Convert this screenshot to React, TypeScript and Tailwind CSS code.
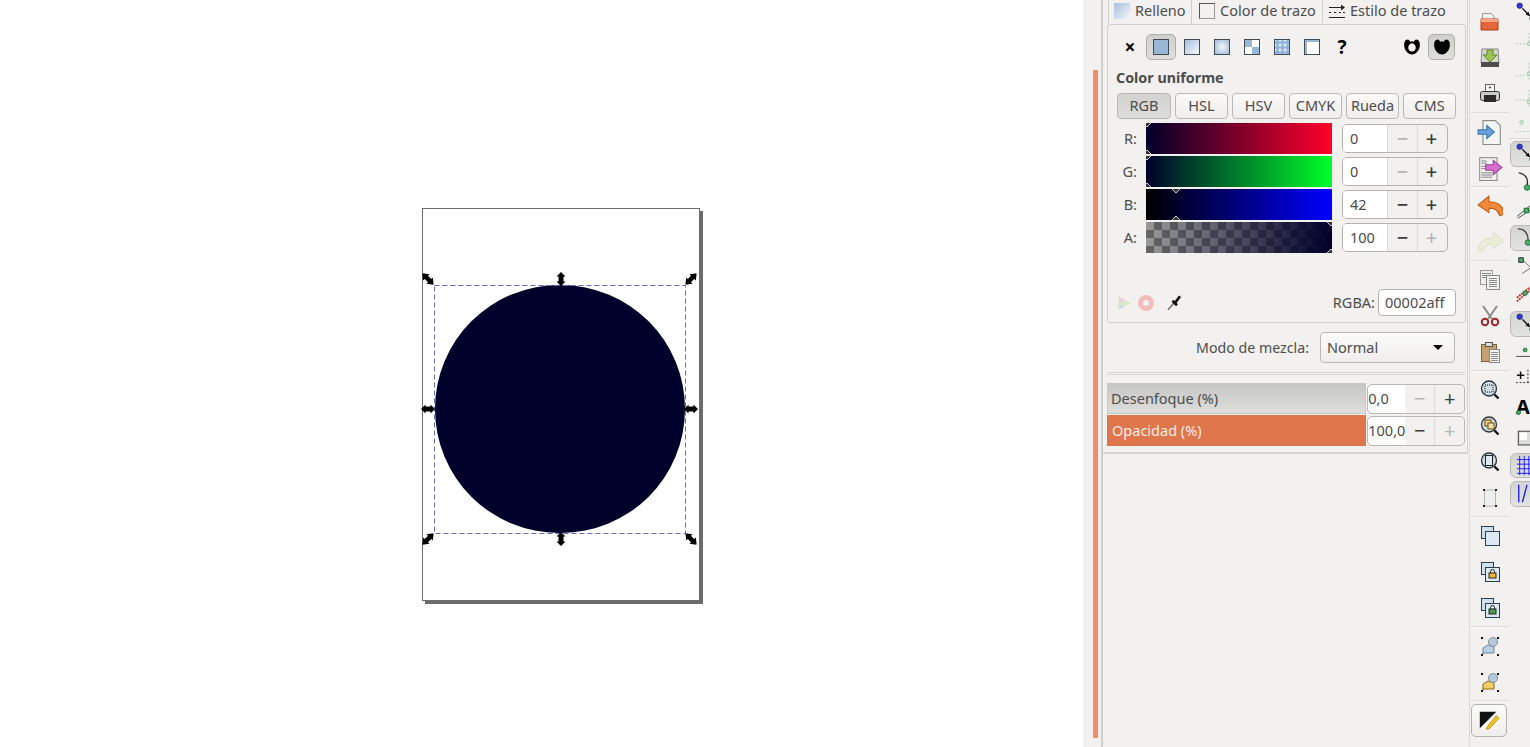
import React from "react";

const S = ({ children, size = 24, className = "" }: { children: React.ReactNode; size?: number; className?: string }) => (
  <svg width={size} height={size} viewBox="0 0 24 24" className={"shrink-0 " + className}>{children}</svg>
);

const Handle = ({ x, y, rot, diag }: { x: number; y: number; rot: number; diag?: boolean }) => (
  <svg width={diag ? 16 : 14} height={diag ? 16 : 14} viewBox="0 0 14 14" className="absolute" style={{ left: x - (diag ? 8 : 7), top: y - (diag ? 8 : 7), transform: `rotate(${rot}deg)` }}>
    <path d={diag ? "M7 0L11 5H9V9H11L7 14L3 9H5V5H3Z" : "M7 0L11.5 4.5H9.5V9.5H11.5L7 14L2.5 9.5H4.5V4.5H2.5Z"} fill="#000" />
  </svg>
);

const Mode = ({ children, active }: { children: React.ReactNode; active?: boolean }) => (
  <div className={"w-[30px] h-[26px] flex items-center justify-center shrink-0 " + (active ? "rounded-[5px] border border-[#aeaeab] bg-[linear-gradient(#cfcfcd,#dededc)] w-[28px] mx-px" : "")}>{children}</div>
);

const modeBox = "w-[16px] h-[16px] border border-[#3f4a55]";

const TabBtn = ({ t, active }: { t: string; active?: boolean }) => (
  <div className={"h-[26px] rounded-[4px] border border-[#b9b8b5] flex items-center justify-center text-[14.5px] text-[#4c4c4c] " + (active ? "w-[54px] bg-[linear-gradient(#d2d2d0,#dddddb)]" : "w-[53px] bg-[linear-gradient(#fafaf9,#efeeed)]")}>{t}</div>
);

const Spin = ({ v, minusOff, plusOff }: { v: string; minusOff?: boolean; plusOff?: boolean }) => (
  <div className="w-[106px] h-[29px] rounded-[5px] border border-[#b3b2af] flex overflow-hidden text-[14.5px] text-[#4c4c4c]">
    <div className="w-[44px] bg-white flex items-center pl-[7px]">{v}</div>
    <div className={"w-[30px] border-l border-[#dcdbd9] flex items-center justify-center text-[20px] font-medium leading-none " + (minusOff ? "text-[#b5b5b3]" : "text-[#3c3c3c]")}>−</div>
    <div className={"flex-1 pr-[2px] border-l border-[#dcdbd9] flex items-center justify-center text-[20px] font-medium leading-none " + (plusOff ? "text-[#b5b5b3]" : "text-[#3c3c3c]")}>+</div>
  </div>
);

const Marker = ({ x, top }: { x: number; top: boolean }) => (
  <svg width="10" height="6" viewBox="0 0 10 6" className={"absolute " + (top ? "top-0" : "bottom-0")} style={{ left: x - 5 }}>
    {top ? <path d="M1 0L5 4L9 0" fill="#333" stroke="#ccc" /> : <path d="M1 6L5 2L9 6" fill="#333" stroke="#ccc" />}
  </svg>
);

const Slider = ({ label, bg, x, v, minusOff, plusOff }: { label: string; bg: string; x: number; v: string; minusOff?: boolean; plusOff?: boolean }) => (
  <div className="h-[31px] flex items-center">
    <div className="w-[30px] text-right text-[14.5px] text-[#4c4c4c] pr-px">{label}</div>
    <div className={"relative w-[186px] h-[31px] ml-[8px] overflow-hidden " + bg}>
      <Marker x={x} top />
      <Marker x={x} top={false} />
    </div>
    <div className="ml-[10px]"><Spin v={v} minusOff={minusOff} plusOff={plusOff} /></div>
  </div>
);

const Bar = ({ label, v, on, minusOff, plusOff }: { label: string; v: string; on?: boolean; minusOff?: boolean; plusOff?: boolean }) => (
  <div className="h-[31px] flex items-center text-[14.5px]">
    <div className={"w-[260px] h-[31px] flex items-center " + (on ? "pl-[5px] bg-[#df764b] text-[#f6ece6]" : "bg-[linear-gradient(#c6c6c4,#dededc)] text-[#4c4c4c] border border-[#c8c8c6] pl-[3px]")}>{label}</div>
    <div className="w-[98px] h-[30px] ml-px rounded-[5px] border border-[#b9b8b5] flex text-[#4c4c4c]">
      <div className="w-[37px] bg-white rounded-l-[5px] flex items-center whitespace-nowrap overflow-hidden">{v}</div>
      <div className={"w-[29px] flex items-center justify-center text-[20px] leading-none " + (minusOff ? "text-[#b5b5b3]" : "text-[#3c3c3c]")}>−</div>
      <div className={"flex-1 border-l border-[#dcdbd9] flex items-center justify-center text-[20px] leading-none " + (plusOff ? "text-[#b5b5b3]" : "text-[#3c3c3c]")}>+</div>
    </div>
  </div>
);

const Doc = ({ x = 5, y = 2, w = 14, h = 20, fill = "#f4f4f2" }: { x?: number; y?: number; w?: number; h?: number; fill?: string }) => (
  <rect x={x + 0.5} y={y + 0.5} width={w} height={h} fill={fill} stroke="#8b8b8b" />
);

const lines = (x: number, y: number, n: number, w: number) =>
  Array.from({ length: n }).map((_, i) => <rect key={i} x={x} y={y + i * 2} width={w} height="1" fill="#8a8a8a" />);

const Mag = ({ children }: { children?: React.ReactNode }) => (
  <S>
    <circle cx="11" cy="10.5" r="7.5" fill="#cfdde6" stroke="#2e3436" strokeWidth="1.3" />
    {children}
    <path d="M16.5 16.5L20.5 20.5" stroke="#111" strokeWidth="2.4" />
  </S>
);

const Layered = ({ lock }: { lock?: string }) => (
  <S>
    <rect x="3.5" y="2.5" width="12" height="12" fill="#cfe0ee" stroke="#2e3f4f" />
    <rect x="7.5" y="7.5" width="14" height="14" fill="#dce9f3" stroke="#2e3f4f" />
    {lock && <>
      <path d="M12.5 13V11.5a2 2 0 0 1 4 0V13" fill="none" stroke="#222" />
      <rect x="11" y="13" width="7" height="5" fill={lock} stroke="#222" />
    </>}
  </S>
);

const Item = ({ children }: { children: React.ReactNode }) => <div className="h-[36px] shrink-0 flex items-center justify-center">{children}</div>;
const Sep = () => <div className="h-[2px] shrink-0 border-t border-[#dcdbd9] bg-[#f6f5f4]" />;

const SnapRow = ({ h, active, children }: { h: number; active?: boolean; children?: React.ReactNode }) => (
  <div className="shrink-0 flex items-center pl-px" style={{ height: h }}>
    <div className={"w-[28px] h-full flex items-center " + (active ? "rounded-[6px] border border-[#b9b8b5] bg-[linear-gradient(#d4d4d2,#e2e2e0)] pl-[5px]" : "pl-[6px]")}>{children}</div>
  </div>
);

const SnapArrow = () => (
  <S size={22}>
    <circle cx="4" cy="4" r="3" fill="#3333ff" stroke="#111" strokeWidth="0.6" />
    <path d="M7 7L14 14" stroke="#000" strokeWidth="1.4" />
    <path d="M15.5 15.5L10.5 13.5L13.5 10.5Z" fill="#000" />
    <circle cx="18" cy="18" r="3" fill="#4bae6a" stroke="#1e6a34" />
  </S>
);

const Faint = ({ kind }: { kind: number }) => (
  <S size={22}>
    <g stroke="#a5cfa9" strokeDasharray="2 2" fill="none">
      {kind === 0 && <path d="M0 14H14V1" />}
      {kind === 1 && <path d="M0 16H14M14 2V20" />}
      {kind === 2 && <path d="M0 12H18M14 1V20" />}
      {kind === 3 && <path d="M0 18H18V1" />}
    </g>
    <circle cx={kind === 3 ? 6 : 14} cy={kind === 3 ? 8 : 14} r="2" fill="#cfe7d1" stroke="#9fc9a4" />
  </S>
);

export default function App() {
  return (
    <div className="w-[1530px] h-[747px] flex overflow-hidden bg-[#f2f1f0] font-['Noto_Sans','Open_Sans',sans-serif]">
      {/* Canvas */}
      <div className="relative w-[1083px] h-full bg-white shrink-0">
        <div className="absolute left-[422px] top-[208px] w-[278px] h-[393px] bg-white border border-[#6e6e6e] shadow-[3px_3px_0_#6b6b6b]" />
        <div className="absolute left-[435px] top-[285px] w-[250px] h-[248px] rounded-full bg-[#00002a]" />
        <svg className="absolute left-[433px] top-[284px]" width="255" height="251">
          <rect x="1.5" y="1.5" width="251" height="248" fill="none" stroke="#6868c0" strokeDasharray="5 3" />
        </svg>
        <Handle x={428} y={279} rot={-45} diag />
        <Handle x={561} y={279} rot={0} />
        <Handle x={691} y={279} rot={45} diag />
        <Handle x={428} y={409} rot={90} />
        <Handle x={691} y={409} rot={90} />
        <Handle x={428} y={539} rot={45} diag />
        <Handle x={561} y={539} rot={0} />
        <Handle x={691} y={539} rot={-45} diag />
      </div>

      {/* Scrollbar strip */}
      <div className="w-[18px] h-full shrink-0 pl-[10px] pt-[70px] pb-[9px]">
        <div className="w-[5px] h-full bg-[#f28e66]" />
      </div>
      <div className="w-[2px] h-full shrink-0 bg-[#cfcecc]" />

      {/* Panel */}
      <div className="w-[365px] shrink-0 h-[454px] border-b-2 border-r border-[#d5d4d2] pl-[4px] flex flex-col">
        {/* Tabs */}
        <div className="h-[24px] flex text-[14.5px] text-[#4c4c4c] shrink-0 pl-px">
          <div className="w-[84px] h-[24px] border-x border-[#d0cfcc] bg-[#f2f1f0] flex items-center pl-[5px] pb-[3px] gap-[5px]">
            <div className="w-[16px] h-[16px] bg-[linear-gradient(135deg,#a8c0de,#f2f5f9)]" />Relleno
          </div>
          <div className="w-[128px] h-[23px] ml-[3px] border-r border-[#d0cfcc] flex items-center pl-[4px] pb-[2px] gap-[5px]">
            <div className="w-[16px] h-[16px] border border-[#555] border-r-[#999] border-b-[#999]" />Color de trazo
          </div>
          <div className="w-[130px] h-[23px] flex items-center pl-[5px] pb-[2px] gap-[4px]">
            <svg width="18" height="16" viewBox="0 0 18 16">
              <path d="M1 4.5H13M1 9.5H3M6 9.5H8M11 9.5H13M15 9.5H17M1 14.5H17" stroke="#222" fill="none" />
              <path d="M13 1.5L17 4.5L13 7.5Z" fill="#222" />
            </svg>
            Estilo de trazo
          </div>
        </div>

        {/* Frame */}
        <div className="w-[359px] h-[299px] shrink-0 border border-[#d0cfcc] rounded-[3px] pt-[9px] flex flex-col">
          <div className="h-[26px] flex items-center pl-[7px] pr-[10px]">
            <Mode><span className="text-[19px] font-bold text-black leading-none">×</span></Mode>
            <Mode active><div className={modeBox + " bg-[#98b6d6]"} /></Mode>
            <Mode><div className={modeBox + " bg-[linear-gradient(135deg,#a8c0de,#f5f7fa)]"} /></Mode>
            <Mode><div className={modeBox + " bg-[radial-gradient(circle,#f5f7fa,#9db8d8)]"} /></Mode>
            <Mode><div className={modeBox + " bg-[conic-gradient(#fff_0_25%,#98b6d6_0_50%,#fff_0_75%,#98b6d6_0_100%)]"} /></Mode>
            <Mode><div className={modeBox + " bg-[#dfe8f2] bg-[radial-gradient(circle,#8fb2d8_2px,transparent_2.5px)] bg-[length:5px_5px]"} /></Mode>
            <Mode><div className={modeBox + " bg-white shadow-[inset_2px_2px_0_#98b6d6]"} /></Mode>
            <Mode><span className="text-[19px] font-bold text-black leading-none">?</span></Mode>
            <div className="ml-auto flex items-center gap-[2px]">
              <div className="w-[28px] h-[26px] flex items-center justify-center">
                <S size={18}>
                  <path fillRule="evenodd" d="M6 2C3 2 1.5 5 1.5 9c0 7 5 13 10.5 13s10.5-6 10.5-13c0-4-1.5-7-4.5-7-2 0-3 2-3.5 3-1-.6-2-.8-2.5-.8s-1.5.2-2.5.8C9 4 8 2 6 2zM12 7c-3 0-5 3-5 6s2 5 5 5 5-2 5-5-2-6-5-6z" fill="#000" />
                </S>
              </div>
              <div className="w-[27px] h-[26px] rounded-[5px] border border-[#aeaeab] bg-[linear-gradient(#cfcfcd,#dededc)] flex items-center justify-center">
                <S size={18}>
                  <path d="M6 2C3 2 1.5 5 1.5 9c0 7 5 13 10.5 13s10.5-6 10.5-13c0-4-1.5-7-4.5-7-2 0-3 2-3.5 3-1-.6-2-.8-2.5-.8s-1.5.2-2.5.8C9 4 8 2 6 2z" fill="#000" />
                </S>
              </div>
            </div>
          </div>

          <div className="h-[17px] mt-[9px] pl-[8px] text-[14.3px] font-bold text-[#4c4c4c] flex items-center">Color uniforme</div>

          <div className="flex gap-[4px] pl-[9px] mt-[7px]">
            <TabBtn t="RGB" active /><TabBtn t="HSL" /><TabBtn t="HSV" /><TabBtn t="CMYK" /><TabBtn t="Rueda" /><TabBtn t="CMS" />
          </div>

          <div className="flex flex-col gap-[2px] mt-[4px]">
            <Slider label="R:" bg="bg-[linear-gradient(to_right,#00002a,#ff002a)]" x={1} v="0" minusOff />
            <Slider label="G:" bg="bg-[linear-gradient(to_right,#00002a,#00ff2a)]" x={1} v="0" minusOff />
            <Slider label="B:" bg="bg-[linear-gradient(to_right,#000000,#0000ff)]" x={30} v="42" />
            <Slider label="A:" bg="[background:linear-gradient(to_right,transparent,#00002a),repeating-conic-gradient(#666_0_25%,#999_0_50%)_0_0/16px_16px]" x={185} v="100" plusOff />
          </div>

          <div className="mt-auto mb-[5px] flex items-center pl-[9px] pr-[9px] h-[27px] -translate-y-px">
            <S size={18}>
              <path d="M2 3L18 12L2 21Z" fill="#d5e8c8" />
              <path d="M2 3L10 7.5L6 14Z" fill="#e8d3dd" />
              <path d="M2 21L6 14L10 16.5L2 21Z" fill="#c9dcec" />
            </S>
            <svg width="18" height="18" viewBox="0 0 18 18" className="ml-[2px]">
              <circle cx="9" cy="9" r="5.5" fill="none" stroke="#f2bcbc" strokeWidth="5" />
            </svg>
            <S size={18} className="ml-[10px]">
              <path d="M4 21L12 12" stroke="#777" strokeWidth="2.4" />
              <path d="M10 9L16 15M14 11L20 3" stroke="#111" strokeWidth="3.6" />
            </S>
            <div className="ml-auto text-[14.5px] text-[#4c4c4c]">RGBA:</div>
            <div className="ml-[3px] w-[78px] h-[27px] rounded-[4px] border border-[#b3b2af] bg-white text-[14.5px] text-[#4c4c4c] flex items-center pl-[6px]">00002aff</div>
          </div>
        </div>

        {/* Blend */}
        <div className="h-[31px] mt-[9px] flex items-center justify-end shrink-0 pr-[12px] text-[14.5px] text-[#4c4c4c]">
          <div className="text-[14.2px]">Modo de mezcla:</div>
          <div className="ml-[11px] w-[135px] h-[31px] rounded-[4px] border border-[#b9b8b5] bg-[linear-gradient(#fafaf9,#efeeed)] flex items-center justify-between pl-[6px] pr-[11px]">
            Normal
            <div className="w-0 h-0 border-x-[5px] border-x-transparent border-t-[5px] border-t-black" />
          </div>
        </div>

        <div className="h-[3px] mt-[9px] mb-[8px] mr-[2px] border-y border-[#d5d4d2] shrink-0" />

        <div className="flex flex-col gap-px pr-[2px]">
          <Bar label="Desenfoque (%)" v="0,0" minusOff />
          <Bar label="Opacidad (%)" v="100,0" on plusOff />
        </div>
      </div>

      {/* Commands toolbar */}
      <div className="w-[1px] h-full shrink-0" />
      <div className="w-[40px] h-full shrink-0 border-l border-[#dcdbd9] pl-px pt-[4px] flex flex-col">
        <Item>
          <S>
            <path d="M4.5 9V3.5H13L16 6V9" fill="#f4f4f2" stroke="#999" />
            <path d="M3 9H20V20H3Z" fill="#e8643a" stroke="#a8401d" />
            <rect x="3" y="9" width="17" height="3" fill="#f9a783" />
          </S>
        </Item>
        <Item>
          <S>
            <path d="M4 3H20L21 17H3Z" fill="#d5d5d3" stroke="#888" />
            <rect x="3" y="16" width="18" height="5" fill="#4e4e4e" />
            <path d="M9 4H15V9H19L12 16L5 9H9Z" fill="#9cc456" stroke="#618b22" />
          </S>
        </Item>
        <Item>
          <S>
            <rect x="7.5" y="2.5" width="9" height="7" fill="#f4f4f2" stroke="#666" />
            <path d="M11 5.5H13M12 4.5V6.5" stroke="#444" />
            <rect x="2.5" y="9.5" width="19" height="9" rx="2" fill="#c9c9c7" stroke="#333" />
            <rect x="6" y="13" width="12" height="7" fill="#2b2b2b" />
          </S>
        </Item>
        <Sep />
        <Item>
          <S size={26}>
            <path d="M5.5 1.5H17L21.5 6V23.5H5.5Z" fill="#f4f4f2" stroke="#8b8b8b" />
            <path d="M1 10H9V6L16 12L9 18V14H1Z" fill="#6aa3dc" stroke="#3b78b5" />
          </S>
        </Item>
        <Item>
          <S size={26}>
            <Doc x={2} y={2} w={16} h={21} />
            {lines(4, 5, 2, 5)}
            {lines(4, 10, 2, 6)}
            {lines(4, 16, 3, 10)}
            <path d="M8 9H15V5L23 11.5L15 18V14H8Z" fill="#d66fd0" stroke="#a23d9d" />
          </S>
        </Item>
        <Sep />
        <Item>
          <S size={26}>
            <path d="M11 3L1 11L11 18V14C16 14 19 15 21 21C24 21 25 18 24 15C22 10 17 8 11 8Z" fill="#ef8a3c" stroke="#c75a14" />
          </S>
        </Item>
        <Item>
          <S size={26}>
            <path d="M15 3L25 11L15 18V14C10 14 7 15 5 21C2 21 1 18 2 15C4 10 9 8 15 8Z" fill="#e9ecd9" stroke="#dfe3cb" />
          </S>
        </Item>
        <Sep />
        <Item>
          <S>
            <rect x="2.5" y="2.5" width="12" height="14" fill="#f0f0ee" stroke="#999" />
            {lines(4, 5, 3, 9)}
            <rect x="8.5" y="7.5" width="13" height="14" fill="#f4f4f2" stroke="#888" />
            {lines(11, 10, 5, 8)}
          </S>
        </Item>
        <Item>
          <S>
            <path d="M5 2L14 15M19 2L10 15" stroke="#8a8a88" strokeWidth="2" />
            <circle cx="7" cy="18" r="3.2" fill="none" stroke="#a3252a" strokeWidth="2" />
            <circle cx="17" cy="18" r="3.2" fill="none" stroke="#a3252a" strokeWidth="2" />
          </S>
        </Item>
        <Item>
          <S>
            <rect x="3.5" y="4.5" width="15" height="17" fill="#c59f6e" stroke="#7d6139" />
            <rect x="7.5" y="2.5" width="7" height="4" fill="#dcdcda" stroke="#555" />
            <rect x="11.5" y="9.5" width="10" height="13" fill="#f4f4f2" stroke="#888" />
            {lines(13, 12, 5, 7)}
          </S>
        </Item>
        <Sep />
        <Item>
          <Mag><rect x="7" y="7" width="8" height="7" fill="none" stroke="#111" strokeDasharray="1 1" /></Mag>
        </Item>
        <Item>
          <Mag>
            <rect x="7" y="6" width="6" height="6" fill="#f2cf7c" stroke="#6a4b10" />
            <rect x="10" y="9" width="6" height="6" fill="#f7e0a6" stroke="#6a4b10" />
          </Mag>
        </Item>
        <Item>
          <Mag><rect x="7.5" y="5.5" width="7" height="10" fill="#dfe9ef" stroke="#222" /></Mag>
        </Item>
        <Item>
          <S>
            <rect x="6.5" y="4" width="11" height="16" fill="#eef0ef" stroke="#b5b5b3" />
            <path d="M5 3H7V5H5ZM17 3H19V5H17ZM5 19H7V21H5ZM17 19H19V21H17Z" fill="#222" />
          </S>
        </Item>
        <Sep />
        <Item><Layered /></Item>
        <Item><Layered lock="#f2b632" /></Item>
        <Item><Layered lock="#4d9b4f" /></Item>
        <Sep />
        <Item>
          <S>
            <path d="M5 20V14L10 11L16 13V19H5Z" fill="#b9cfe2" stroke="#6d8399" />
            <circle cx="15" cy="8" r="4.5" fill="#b6c9d8" stroke="#7e8f9c" />
            <path d="M3 3H5V5H3ZM3 20H5V22H3ZM19 20H21V22H19ZM19 3H21V5H19Z" fill="#111" />
          </S>
        </Item>
        <Item>
          <S>
            <path d="M5 20V14L10 11L16 13V19H5Z" fill="#f4cd6a" stroke="#8a6a18" />
            <circle cx="15" cy="8" r="4.5" fill="#b6c9d8" stroke="#7e8f9c" />
            <path d="M3 3H5V5H3ZM3 20H5V22H3ZM19 20H21V22H19ZM19 3H21V5H19Z" fill="#111" />
          </S>
        </Item>
        <Sep />
        <div className="mt-[2px] w-[36px] h-[33px] rounded-[5px] border border-[#b3b2af] bg-[linear-gradient(#fbfbfa,#efeeed)] flex items-center justify-center">
          <S size={22}>
            <rect x="2" y="2" width="18" height="18" fill="#fff" />
            <path d="M2 2H20L2 20Z" fill="#111" />
            <path d="M10 18L20 6L23 9L13 20L9 21Z" fill="#f2c21a" stroke="#8a6a00" strokeWidth="0.6" />
          </S>
        </div>
      </div>

      {/* Snap toolbar */}
      <div className="flex-1 h-full overflow-hidden flex flex-col">
        <SnapRow h={26}><SnapArrow /></SnapRow>
        <SnapRow h={32}><Faint kind={0} /></SnapRow>
        <SnapRow h={28}><Faint kind={1} /></SnapRow>
        <SnapRow h={28}><Faint kind={2} /></SnapRow>
        <SnapRow h={24}><Faint kind={3} /></SnapRow>
        <div className="h-[3px] shrink-0 border-t border-[#dcdbd9]" />
        <SnapRow h={26} active><SnapArrow /></SnapRow>
        <SnapRow h={30}>
          <S size={22}><path d="M3 2C10 3 14 8 12 17" fill="none" stroke="#222" strokeWidth="1.4" /><circle cx="12" cy="18" r="3" fill="#4bae6a" stroke="#1e6a34" /></S>
        </SnapRow>
        <SnapRow h={27}>
          <S size={22}><path d="M1 18L18 4M2 20L20 8" stroke="#444" /><rect x="9" y="9" width="5" height="5" fill="#4bae6a" stroke="#1e6a34" /></S>
        </SnapRow>
        <div className="h-[1px] shrink-0" />
        <SnapRow h={26} active>
          <S size={22}><path d="M2 2C10 2 14 8 13 16" fill="none" stroke="#444" strokeWidth="1.4" /><circle cx="13" cy="17" r="3" fill="#4bae6a" stroke="#1e6a34" /></S>
        </SnapRow>
        <SnapRow h={29}>
          <S size={22}><path d="M3 3H8V8H3Z" fill="#4bae6a" stroke="#222" /><path d="M8 6L16 14L7 20" fill="none" stroke="#666" /></S>
        </SnapRow>
        <SnapRow h={28}>
          <S size={22}><path d="M1 20L20 4M1 16L20 1" stroke="#c22" strokeWidth="2" strokeDasharray="2 1" /><circle cx="10" cy="11" r="2.5" fill="#4bae6a" stroke="#1e6a34" /></S>
        </SnapRow>
        <div className="h-[3px] shrink-0" />
        <SnapRow h={26} active><SnapArrow /></SnapRow>
        <SnapRow h={26}>
          <S size={22}><path d="M0 19H20V2" fill="none" stroke="#444" /><circle cx="10" cy="12" r="2" fill="#4bae6a" stroke="#1e6a34" /></S>
        </SnapRow>
        <SnapRow h={30}>
          <S size={22}><path d="M1 9H9M5 5V13" stroke="#111" strokeWidth="1.6" /><path d="M0 17H22M13 3V17" stroke="#222" strokeDasharray="2 2" /></S>
        </SnapRow>
        <SnapRow h={28}>
          <div className="relative text-[20px] font-bold text-black leading-none h-[20px] w-[20px]">
            A
            <div className="absolute left-0 bottom-[2px] w-[5px] h-[5px] rounded-full bg-[#4bae6a] border border-[#1e6a34]" />
          </div>
        </SnapRow>
        <div className="h-[3px] shrink-0" />
        <SnapRow h={29}>
          <S size={22}><rect x="2.5" y="3.5" width="15" height="15" fill="#dcdcda" stroke="#333" /><rect x="4" y="5" width="8" height="8" fill="#fff" /></S>
        </SnapRow>
        <SnapRow h={25} active>
          <S size={22}><path d="M1 5H22M1 10H22M1 15H22M1 20H22M4 1V22M9 1V22M14 1V22M19 1V22" stroke="#1414ff" /></S>
        </SnapRow>
        <div className="h-[3px] shrink-0" />
        <SnapRow h={26} active>
          <S size={22}><path d="M3 2V21M7 21L12 2M17 2V21" stroke="#1414ff" strokeWidth="1.4" /></S>
        </SnapRow>
      </div>
    </div>
  );
}
